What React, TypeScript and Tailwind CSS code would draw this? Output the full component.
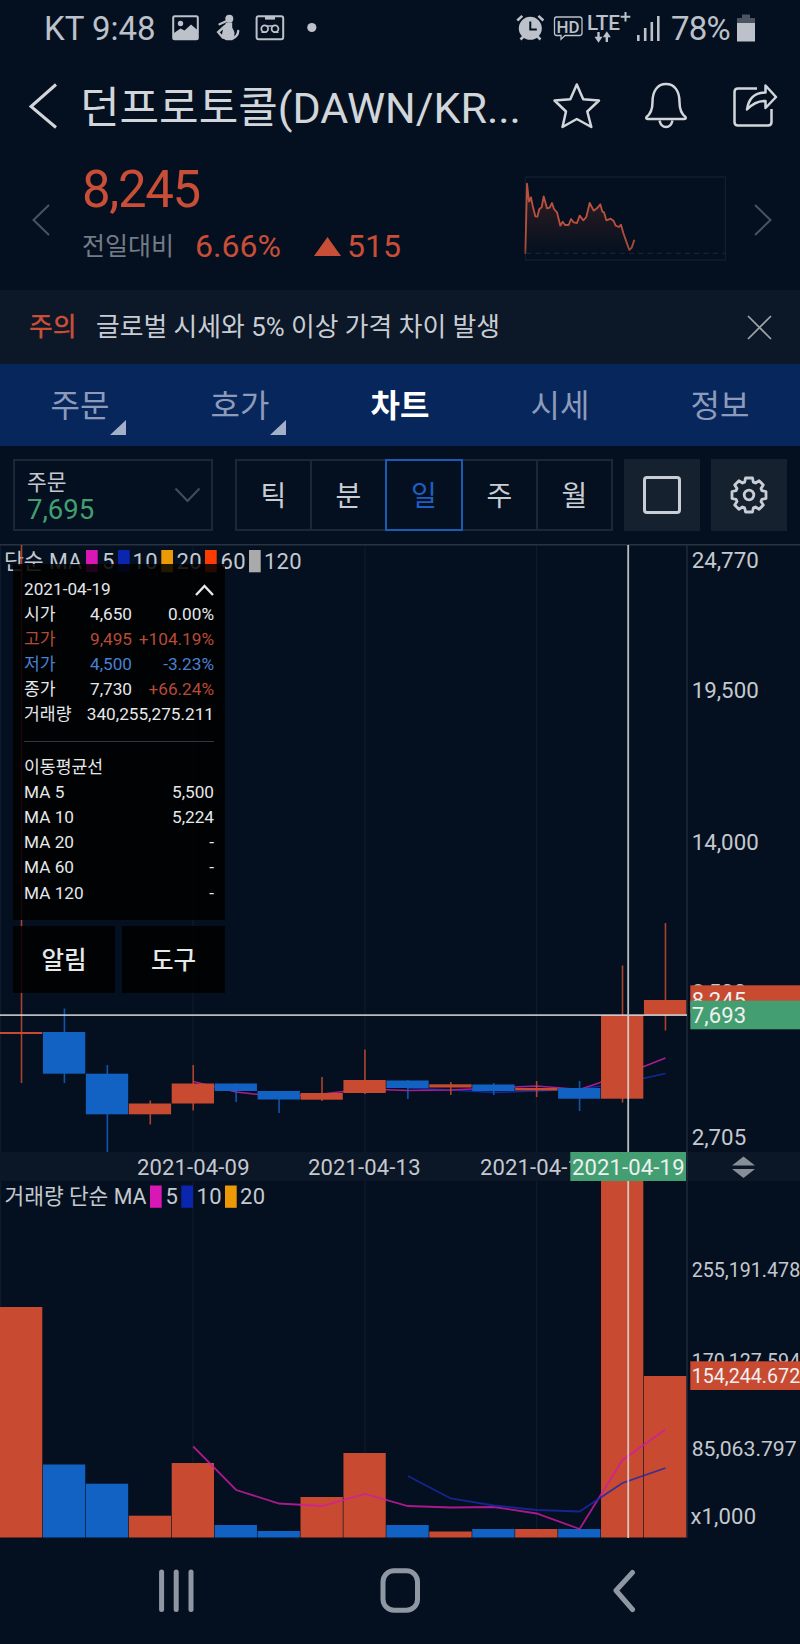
import React, { useState } from "react";

type Dir = "up" | "down";

interface Candle {
  dir: Dir;
  top: number;
  bottom: number;
  high: number;
  low: number;
  volume: number;
}

const RED = "#c84b31";
const BLUE = "#1262c4";
const GREEN = "#439f72";
const MAGENTA = "#d817b4";
const NAVY = "#0b26ae";

const STEP = 42.93;
const PLOT_WIDTH = 687;
const VOLUME_BASE = 1537.5;

const candles: Candle[] = [
  { dir: "up", top: 1032, bottom: 1034, high: 545, low: 1083, volume: 1307 },
  { dir: "down", top: 1032, bottom: 1073.7, high: 1008.5, low: 1083, volume: 1464.5 },
  { dir: "down", top: 1073.7, bottom: 1114.3, high: 1065, low: 1152, volume: 1483.7 },
  { dir: "up", top: 1103.5, bottom: 1114.3, high: 1100.5, low: 1124.5, volume: 1515.7 },
  { dir: "up", top: 1083.5, bottom: 1103.5, high: 1065, low: 1110.5, volume: 1463 },
  { dir: "down", top: 1083.5, bottom: 1091, high: 1083.5, low: 1102, volume: 1525 },
  { dir: "down", top: 1091, bottom: 1099.5, high: 1091, low: 1113, volume: 1531 },
  { dir: "up", top: 1093, bottom: 1099.7, high: 1077, low: 1101, volume: 1497 },
  { dir: "up", top: 1080, bottom: 1093, high: 1049.5, low: 1094, volume: 1453 },
  { dir: "down", top: 1080.5, bottom: 1088, high: 1080, low: 1099, volume: 1525 },
  { dir: "up", top: 1084.3, bottom: 1087.5, high: 1082, low: 1095, volume: 1531.5 },
  { dir: "down", top: 1084.5, bottom: 1091, high: 1083, low: 1095, volume: 1529 },
  { dir: "up", top: 1088, bottom: 1090.5, high: 1081, low: 1097, volume: 1529 },
  { dir: "down", top: 1088, bottom: 1098.7, high: 1081, low: 1111, volume: 1529 },
  { dir: "up", top: 1015, bottom: 1098.7, high: 965.5, low: 1102.5, volume: 1181 },
  { dir: "up", top: 1000, bottom: 1015, high: 923, low: 1030.5, volume: 1376 },
];

const priceMa5 = [1081.5, 1092, 1097, 1094, 1089, 1090.5, 1090, 1088, 1086, 1089.5, 1075, 1058];
const priceMa10 = [1088, 1090, 1092.5, 1091, 1089, 1083, 1073.5];
const volumeMa5 = [1446.5, 1490, 1503.5, 1506, 1494, 1506, 1507.5, 1507, 1513.5, 1529, 1460, 1429.5];
const volumeMa10 = [1476, 1498.5, 1505.5, 1510, 1511.5, 1483, 1468];

const centerOf = (i: number) => i * STEP + 21.5;
const toPoints = (values: number[], start: number) =>
  values.map((y, i) => `${centerOf(i + start)},${y}`).join(" ");

const priceLabels = [
  { text: "24,770", y: 568, w: 67 },
  { text: "19,500", y: 698, w: 67 },
  { text: "14,000", y: 849.5, w: 67 },
  { text: "8,500", y: 1000, w: 54.5 },
  { text: "2,705", y: 1145, w: 54.5 },
];

const volumeLabels = [
  { text: "255,191.478", y: 1277.3, w: 108.5 },
  { text: "170,127.594", y: 1368, w: 108.5 },
  { text: "85,063.797", y: 1456, w: 105 },
];

const priceLegend = [
  { color: MAGENTA, x: 86, label: "5", tx: 102, w: 12 },
  { color: NAVY, x: 118, label: "10", tx: 132.5, w: 25 },
  { color: "#eb9a06", x: 161.3, label: "20", tx: 176.5, w: 25 },
  { color: "#ff3c00", x: 205, label: "60", tx: 220.5, w: 25 },
  { color: "#aaaaaa", x: 249, label: "120", tx: 264, w: 37.5 },
];

const volumeLegend = [
  { color: MAGENTA, x: 150, label: "5", tx: 165.5, w: 12 },
  { color: NAVY, x: 181.3, label: "10", tx: 196.5, w: 25 },
  { color: "#eb9a06", x: 225, label: "20", tx: 240, w: 25 },
];

const tabs = ["주문", "호가", "차트", "시세", "정보"];
const periods = ["틱", "분", "일", "주", "월"];

const quoteRows = [
  { label: "시가", value: "4,650", rate: "0.00%", tone: "text-[#e6e8ea]", rateTone: "text-[#e6e8ea]" },
  { label: "고가", value: "9,495", rate: "+104.19%", tone: "text-[#b94a35]", rateTone: "text-[#b94a35]" },
  { label: "저가", value: "4,500", rate: "-3.23%", tone: "text-[#4a80cf]", rateTone: "text-[#4a80cf]" },
  { label: "종가", value: "7,730", rate: "+66.24%", tone: "text-[#e6e8ea]", rateTone: "text-[#b94a35]" },
];

const maRows = [
  ["MA 5", "5,500"],
  ["MA 10", "5,224"],
  ["MA 20", "-"],
  ["MA 60", "-"],
  ["MA 120", "-"],
];

const StatusBar = () => (
  <div className="flex h-14 items-center pt-[2px] pr-[45px] pl-[44px] text-[33px] text-[#bcc1ca]">
    <span className="w-[116px] whitespace-nowrap">KT 9:48</span>
    <svg className="mb-[2px] ml-[12px]" width="148" height="30" viewBox="172 13 148 30" fill="none">
      {/* gallery */}
      <rect x="173.2" y="16.2" width="24.6" height="23" rx="1.5" stroke="#bcc1ca" strokeWidth="2" />
      <circle cx="180.5" cy="23.5" r="2.7" fill="#bcc1ca" />
      <path d="M174 33l6.5-4.5 4 2 6.5-6 7 6V39h-24z" fill="#bcc1ca" />
      {/* seated figure */}
      <circle cx="229.3" cy="18.8" r="4" fill="#bcc1ca" />
      <path d="M225.5 21.5l-6 2.8" stroke="#bcc1ca" strokeWidth="2.2" strokeLinecap="round" />
      <path d="M226 22.5h6.2v5l2.2 4.5v5l-2.5 2.7h-6.900l-3.500-3 1.500-7.500z" fill="#bcc1ca" />
      <path d="M225 26l-6.800 6.200 4.800 5.600M226.500 39h5.500q6-2.500 6.200-8" stroke="#bcc1ca" strokeWidth="2.400" strokeLinecap="round" />
      {/* voicemail */}
      <rect x="256.6" y="16.2" width="26.6" height="23" rx="2" stroke="#bcc1ca" strokeWidth="2" />
      <path d="M265 16h10v3.600h-10z" fill="#bcc1ca" />
      <circle cx="264.7" cy="28.8" r="3.4" stroke="#bcc1ca" strokeWidth="1.8" />
      <circle cx="275" cy="28.8" r="3.4" stroke="#bcc1ca" strokeWidth="1.8" />
      <path d="M261.5 32.4h5M273.5 32.4h5M266.5 26h7" stroke="#bcc1ca" strokeWidth="1.4" />
      <circle cx="311.8" cy="27.5" r="4.6" fill="#bcc1ca" />
    </svg>
    <svg className="mb-[2px] ml-auto" width="148" height="34" viewBox="515 11 148 34" fill="none">
      {/* alarm */}
      <circle cx="530.3" cy="28.3" r="11.5" fill="#bcc1ca" />
      <path d="M517.3 20.5l5-4.6M543.4 20.5l-5-4.6M520.5 39.5l4-4M540.5 39.5l-4-4" stroke="#bcc1ca" strokeWidth="2.6" />
      <path d="M530.3 21.5v8h6.5" stroke="#04101e" strokeWidth="2" />
      {/* HD call */}
      <path d="M556.5 17h23q2.500 0 2.500 2.500v13.500q0 2.500-2.500 2.500h-14.500l-4 3.800v-3.800h-4.500q-2 0-2-2.500v-13.500q0-2.500 2-2.500z" stroke="#bcc1ca" strokeWidth="1.3" />
      <text x="556.5" y="32.5" fontSize="16.5" fontWeight="500" fill="#bcc1ca" textLength="23" lengthAdjust="spacingAndGlyphs">HD</text>
      <text x="587" y="29.7" fontSize="20" fontWeight="500" fill="#bcc1ca" textLength="33" lengthAdjust="spacingAndGlyphs">LTE</text>
      <path d="M625.5 12v9.500M620.700 16.700h9.600" stroke="#bcc1ca" strokeWidth="2" />
      <path d="M598.5 32v5M606.8 42v-5" stroke="#bcc1ca" strokeWidth="2.4" />
      <path d="M594.5 36.7h8l-4 6zM602.8 37.3h8l-4-6z" fill="#bcc1ca" />
      {/* signal */}
      <path d="M638.3 35v6M645.2 28v13M651.8 22v19M658.3 16v25" stroke="#bcc1ca" strokeWidth="2.6" />
    </svg>
    <span className="ml-[8px] w-[62px] tracking-[-0.8px] whitespace-nowrap">78%</span>
    <svg className="mb-[2px] ml-[4px]" width="18" height="28" viewBox="0 0 18 28">
      <path d="M5 0.5h8v3.500h5v5H0V4h5z" fill="#4b5460" />
      <path d="M0 9h18v18.500H0z" fill="#bcc1ca" />
    </svg>
  </div>
);

const TitleBar = () => (
  <div className="flex h-[100px] items-center pl-[29px] text-[#d2d6db]">
    <svg width="28" height="46" viewBox="0 0 28 46" fill="none">
      <path d="M27 1.5L2 23.5L27 44.5" stroke="currentColor" strokeWidth="3" />
    </svg>
    <h1 className="mt-[4px] ml-[23px] w-[447px] text-[43px] leading-none whitespace-nowrap">던프로토콜(DAWN/KR...</h1>
    <svg className="ml-[25px]" width="226" height="48" viewBox="552 82 226 48" fill="none" stroke="currentColor" strokeWidth="2.5" strokeLinejoin="round">
      <path d="M576.8 84.5L583.2 99.3L599 100.5L587.3 111.5L591.3 127L576.8 119L562.5 127L566 111.5L554.5 100.5L570.3 99.3Z" />
      <path d="M646.5 117q6-4.500 6-15c0-11 5-18 13.500-18s13.500 7 13.500 18q0 10.500 6 15q1 2-1.500 2h-36q-2.500 0-1.500-2z" />
      <path d="M659.5 120.5q1.500 6.500 6.500 6.500t6.500-6.500" />
      <path d="M757 88.500H738q-3.500 0-3.500 3.500v30q0 3.500 3.500 3.500h30q3.500 0 3.500-3.500V109" />
      <path d="M747 109.500q2.500-17 18.500-17v-7L776 97l-10.500 11v-7q-10-.5-18.500 8.500z" />
    </svg>
  </div>
);

const Sparkline = () => {
  const line =
    "377,343 382,132 388,186 394,173 399,198 407,230 413,231 419,208 426,203 432,170 442,206 450,204 457,190 463,208 472,218 482,258 489,246 496,256 507,256 514,238 522,248 532,250 540,228 551,242 560,232 570,190 582,213 592,206 602,194 608,216 613,218 620,242 633,237 642,244 648,258 658,262 664,255 671,280 680,306 689,331 696,324 704,300";
  return (
    <svg width="204" height="86" viewBox="373 109 612 258" fill="none">
      <defs>
        <linearGradient id="fade" x1="0" y1="132" x2="0" y2="343" gradientUnits="userSpaceOnUse">
          <stop offset="0" stopColor={RED} stopOpacity="0.24" />
          <stop offset="1" stopColor={RED} stopOpacity="0" />
        </linearGradient>
        <linearGradient id="stroke" x1="0" y1="132" x2="0" y2="350" gradientUnits="userSpaceOnUse">
          <stop offset="0.5" stopColor="#bb503c" />
          <stop offset="0.88" stopColor="#a84a38" />
          <stop offset="1" stopColor="#5a2f2c" />
        </linearGradient>
      </defs>
      <rect x="377" y="112" width="600" height="249" stroke="#152232" strokeWidth="3" />
      <polygon points={`${line} 704,343`} fill="url(#fade)" />
      <path d="M380 341h597" stroke="#1d2a3a" strokeWidth="3" strokeDasharray="15 13" />
      <polyline points={line} stroke="url(#stroke)" strokeWidth="5.5" strokeLinejoin="round" />
    </svg>
  );
};

const PriceSummary = () => (
  <section className="flex h-[134px] pl-[32px]">
    <svg className="mt-[48px]" width="18" height="32" viewBox="0 0 18 32" fill="none">
      <path d="M17 1L1.500 16L17 31" stroke="#49535f" strokeWidth="2" />
    </svg>
    <div className="ml-[32px] w-[440px] text-[#c84e37]">
      <div className="mt-[6px] h-[56px] text-[51px] leading-[56px] tracking-[-1.4px]">8,245</div>
      <div className="flex h-[56px] items-center whitespace-nowrap">
        <span className="mt-[1px] w-[113px] text-[25px] text-[#737c87]">전일대비</span>
        <span className="mt-[-1px] w-[119px] text-[32px]">6.66%</span>
        <svg className="mt-[1px] mr-[6px]" width="27" height="19" viewBox="0 0 27 19">
          <path d="M13.5 0L27 19H0z" fill="currentColor" />
        </svg>
        <span className="mt-[-1px] text-[32px]">515</span>
      </div>
    </div>
    <div className="mt-[20px] ml-[2px]">
      <Sparkline />
    </div>
    <svg className="mt-[48px] ml-[26px]" width="18" height="32" viewBox="0 0 18 32" fill="none">
      <path d="M1 1L16.500 16L1 31" stroke="#49535f" strokeWidth="2" />
    </svg>
  </section>
);

const Chart = () => (
  <svg className="block" width="800" height="994" viewBox="0 544 800 994" fontSize="22" fill="#c5c9cf">
    {/* grid and axis frame */}
    <path d="M0.5 544V1538M193 544V1538M365 544V1538M536.5 544V1538" stroke="#0e1b2a" strokeWidth="1.3" />
    <rect x="0" y="543.5" width="800" height="2" fill="#273341" />
    <rect x="0" y="1152" width="800" height="29" fill="#0b1627" />
    <path d={`M${PLOT_WIDTH} 545V1538`} stroke="#1d2938" strokeWidth="1.6" />

    {/* legends */}
    <text x="4" y="568.5" textLength="78" lengthAdjust="spacingAndGlyphs">단순 MA</text>
    {priceLegend.map((item) => (
      <g key={item.label}>
        <rect x={item.x} y="550" width="11.7" height="22.3" fill={item.color} />
        <text x={item.tx} y="568.5" textLength={item.w}>{item.label}</text>
      </g>
    ))}
    <text x="4.5" y="1204" textLength="142" lengthAdjust="spacingAndGlyphs">거래량 단순 MA</text>
    {volumeLegend.map((item) => (
      <g key={item.label}>
        <rect x={item.x} y="1185.5" width="11.7" height="22.3" fill={item.color} />
        <text x={item.tx} y="1204" textLength={item.w}>{item.label}</text>
      </g>
    ))}

    {/* price pane */}
    <polyline points={toPoints(priceMa10, 9)} fill="none" stroke="#12299b" strokeWidth="1.5" />
    <polyline points={toPoints(priceMa5, 4)} fill="none" stroke="#aa1c93" strokeWidth="1.5" />
    {candles.map((c, i) => (
      <g key={i} fill={c.dir === "up" ? RED : BLUE}>
        <rect x={centerOf(i) - 0.8} y={c.high} width="1.6" height={c.low - c.high} opacity="0.85" />
        <rect x={i * STEP} y={c.top} width="42.3" height={c.bottom - c.top} />
      </g>
    ))}

    {/* volume pane */}
    {candles.map((c, i) => (
      <rect key={i} x={i * STEP} y={c.volume} width="42.3" height={VOLUME_BASE - c.volume} fill={c.dir === "up" ? RED : BLUE} />
    ))}
    <polyline points={toPoints(volumeMa5, 4)} fill="none" stroke="#d01ca4" strokeOpacity="0.82" strokeWidth="1.8" />
    <polyline points={toPoints(volumeMa10, 9)} fill="none" stroke="#1a2aa8" strokeOpacity="0.82" strokeWidth="1.8" />

    {/* axis labels */}
    {priceLabels.map((l) => (
      <text key={l.text} x="691.7" y={l.y} textLength={l.w} lengthAdjust="spacingAndGlyphs">{l.text}</text>
    ))}
    {volumeLabels.map((l) => (
      <text key={l.text} x="691.7" y={l.y} fontSize="21" textLength={l.w} lengthAdjust="spacingAndGlyphs">{l.text}</text>
    ))}
    <text x="690.5" y="1523.7" textLength="65.5">x1,000</text>
    <text x="137" y="1174.5" textLength="112.5">2021-04-09</text>
    <text x="308" y="1174.5" textLength="112.5">2021-04-13</text>
    <text x="480" y="1174.5" textLength="112.5">2021-04-15</text>
    <path d="M743.5 1156.5L755 1165.500H732zM732 1169h23l-11.500 9z" fill="#868e98" />

    {/* crosshair and current value markers */}
    <path d="M628.2 545V1538M0 1015.2H687" stroke="#d9dadb" strokeOpacity="0.85" strokeWidth="1.8" />
    <g fill="#eef0f1">
      <rect x="690.3" y="985.3" width="110" height="28" fill={RED} />
      <text x="691.7" y="1007.5" textLength="54.5">8,245</text>
      <rect x="690.3" y="1000.7" width="110" height="28.6" fill={GREEN} />
      <text x="691.7" y="1022.5" textLength="54.5">7,693</text>
      <rect x="690.3" y="1361.3" width="110" height="28.7" fill={RED} />
      <text x="691.7" y="1382.8" fontSize="21" textLength="108.5" lengthAdjust="spacingAndGlyphs">154,244.672</text>
      <rect x="570.3" y="1152" width="115.7" height="29" fill={GREEN} />
      <text x="572" y="1174.5" textLength="112.5">2021-04-19</text>
    </g>
  </svg>
);

const QuotePanel = () => (
  <div className="absolute top-[20px] left-[13px] w-[212px]">
    <div className="h-[356px] bg-black/85 pt-[13px] pr-[11px] pl-[11px] text-[17.2px] text-[#e6e8ea]">
      <div className="flex h-[25px] items-center justify-between">
        <span>2021-04-19</span>
        <svg width="19" height="12" viewBox="0 0 19 12" fill="none">
          <path d="M1 11L9.500 2L18 11" stroke="currentColor" strokeWidth="2.4" />
        </svg>
      </div>
      {quoteRows.map((row) => (
        <div key={row.label} className="flex h-[25.2px] items-center">
          <span className={`w-[50px] ${row.tone}`}>{row.label}</span>
          <span className={`w-[58px] text-right ${row.tone}`}>{row.value}</span>
          <span className={`flex-1 text-right whitespace-nowrap ${row.rateTone}`}>{row.rate}</span>
        </div>
      ))}
      <div className="flex h-[25.2px] items-center justify-between">
        <span>거래량</span>
        <span>340,255,275.211</span>
      </div>
      <div className="mt-[13px] mb-[13px] h-px bg-[#30383c]" />
      <div className="flex h-[25.2px] items-center">이동평균선</div>
      {maRows.map(([label, value]) => (
        <div key={label} className="flex h-[25.2px] items-center justify-between">
          <span>{label}</span>
          <span>{value}</span>
        </div>
      ))}
    </div>
    <div className="mt-[6px] flex gap-[7px] text-[24.5px] font-medium text-[#e6e8ea]">
      <button className="h-[67px] w-[102px] bg-black/85 pt-[4px]">알림</button>
      <button className="h-[67px] w-[103px] bg-black/85 pt-[4px]">도구</button>
    </div>
  </div>
);

const GearIcon = () => (
  <svg width="38" height="38" viewBox="-19 -19 38 38" fill="none" stroke="#c9ced6" strokeWidth="2.8" strokeLinejoin="round">
    <path d="M-3.5 -17H3.5L4.3 -12.9L6.5 -12L10.1 -14.3L14.3 -10.1L12 -6.5L12.9 -4.3L17 -3.5V3.5L12.9 4.3L12 6.5L14.3 10.1L10.1 14.3L6.5 12L4.3 12.9L3.5 17H-3.5L-4.3 12.9L-6.5 12L-10.1 14.3L-14.3 10.1L-12 6.5L-12.9 4.3L-17 3.5V-3.5L-12.9 -4.3L-12 -6.5L-14.3 -10.1L-10.1 -14.3L-6.5 -12L-4.3 -12.9Z" />
    <circle r="4.8" />
  </svg>
);

const App: React.FC = () => {
  const [activeTab, setActiveTab] = useState("차트");
  const [period, setPeriod] = useState("일");

  return (
    <div className="h-[1644px] w-[800px] overflow-hidden bg-[#04101f] font-[Roboto,'Noto_Sans_CJK_KR',sans-serif]">
      <StatusBar />
      <TitleBar />
      <PriceSummary />

      {/* NOTICE */}
      <div className="flex h-[74px] items-center bg-[#0c1727] pr-[28px] pl-[29px] text-[25.8px] whitespace-nowrap">
        <span className="w-[67px] font-medium text-[#c84e37]">주의</span>
        <span className="text-[#c9cdd3]">글로벌 시세와 5% 이상 가격 차이 발생</span>
        <svg className="ml-auto" width="25" height="25" viewBox="0 0 25 25" fill="none">
          <path d="M1 1L24 24M24 1L1 24" stroke="#a0a5ab" strokeWidth="1.7" />
        </svg>
      </div>

      {/* TABS */}
      <nav className="grid h-[82px] grid-cols-5 bg-[#07265b] text-[32px]">
        {tabs.map((tab, i) => (
          <button
            key={tab}
            onClick={() => setActiveTab(tab)}
            className={`relative pt-[2px] ${activeTab === tab ? "font-bold text-white" : "text-[#8d9bbb]"}`}
          >
            {tab}
            {i < 2 && (
              <svg className="absolute top-[56px] left-[110px]" width="16" height="15" viewBox="0 0 16 15">
                <path d="M16 0V15H0z" fill="#a3aec8" />
              </svg>
            )}
          </button>
        ))}
      </nav>

      {/* TOOLBAR */}
      <div className="flex h-[98px] pt-[13px] pl-[13px]">
        <button className="flex h-[72px] w-[200px] items-center justify-between border-2 border-[#1b2735] pr-[10px] pl-[12px] text-left">
          <span className="flex flex-col pt-[3px]">
            <span className="text-[21.5px] leading-[26px] text-[#c5c9cf]">주문</span>
            <span className="text-[27.5px] leading-[28px] text-[#439f72]">7,695</span>
          </span>
          <svg width="27" height="16" viewBox="0 0 27 16" fill="none">
            <path d="M1.5 1.5L13.5 14L25.5 1.5" stroke="#424d5b" strokeWidth="2" />
          </svg>
        </button>
        <div className="ml-[22px] flex h-[72px] w-[378px] text-[28px] text-[#c9cdd3]">
          {periods.map((p) => (
            <button
              key={p}
              onClick={() => setPeriod(p)}
              className={
                period === p
                  ? "z-10 -mr-[2px] w-[78px] border-2 border-[#1c5ab6] pt-[3px] text-[#1c5fc4]"
                  : "-mr-[2px] w-[77px] border-2 border-[#1b2735] pt-[3px]"
              }
            >
              {p}
            </button>
          ))}
        </div>
        <button className="ml-[11px] flex h-[72px] w-[76px] items-center justify-center bg-[#16212f]">
          <span className="h-[38px] w-[38px] rounded-[4px] border-[3px] border-[#c9ced6]" />
        </button>
        <button className="ml-[11px] flex h-[72px] w-[76px] items-center justify-center bg-[#16212f]">
          <GearIcon />
        </button>
      </div>

      {/* CHART */}
      <div className="relative">
        <Chart />
        <QuotePanel />
      </div>

      {/* SYSTEM NAVIGATION */}
      <div className="flex h-[106px] items-start pt-[29px] pl-[158px]">
        <svg width="478" height="48" viewBox="158 1575 478 48" fill="none" stroke="#8f98a2" strokeWidth="5" strokeLinecap="round">
          <path d="M161.6 1580V1617.500M176.2 1580V1617.500M191 1580V1617.500" />
          <rect x="383" y="1578.8" width="34.5" height="39.5" rx="11" />
          <path d="M632.5 1580.5L616 1598.5L632.5 1617.500" strokeLinejoin="round" />
        </svg>
      </div>
    </div>
  );
};

export default App;
